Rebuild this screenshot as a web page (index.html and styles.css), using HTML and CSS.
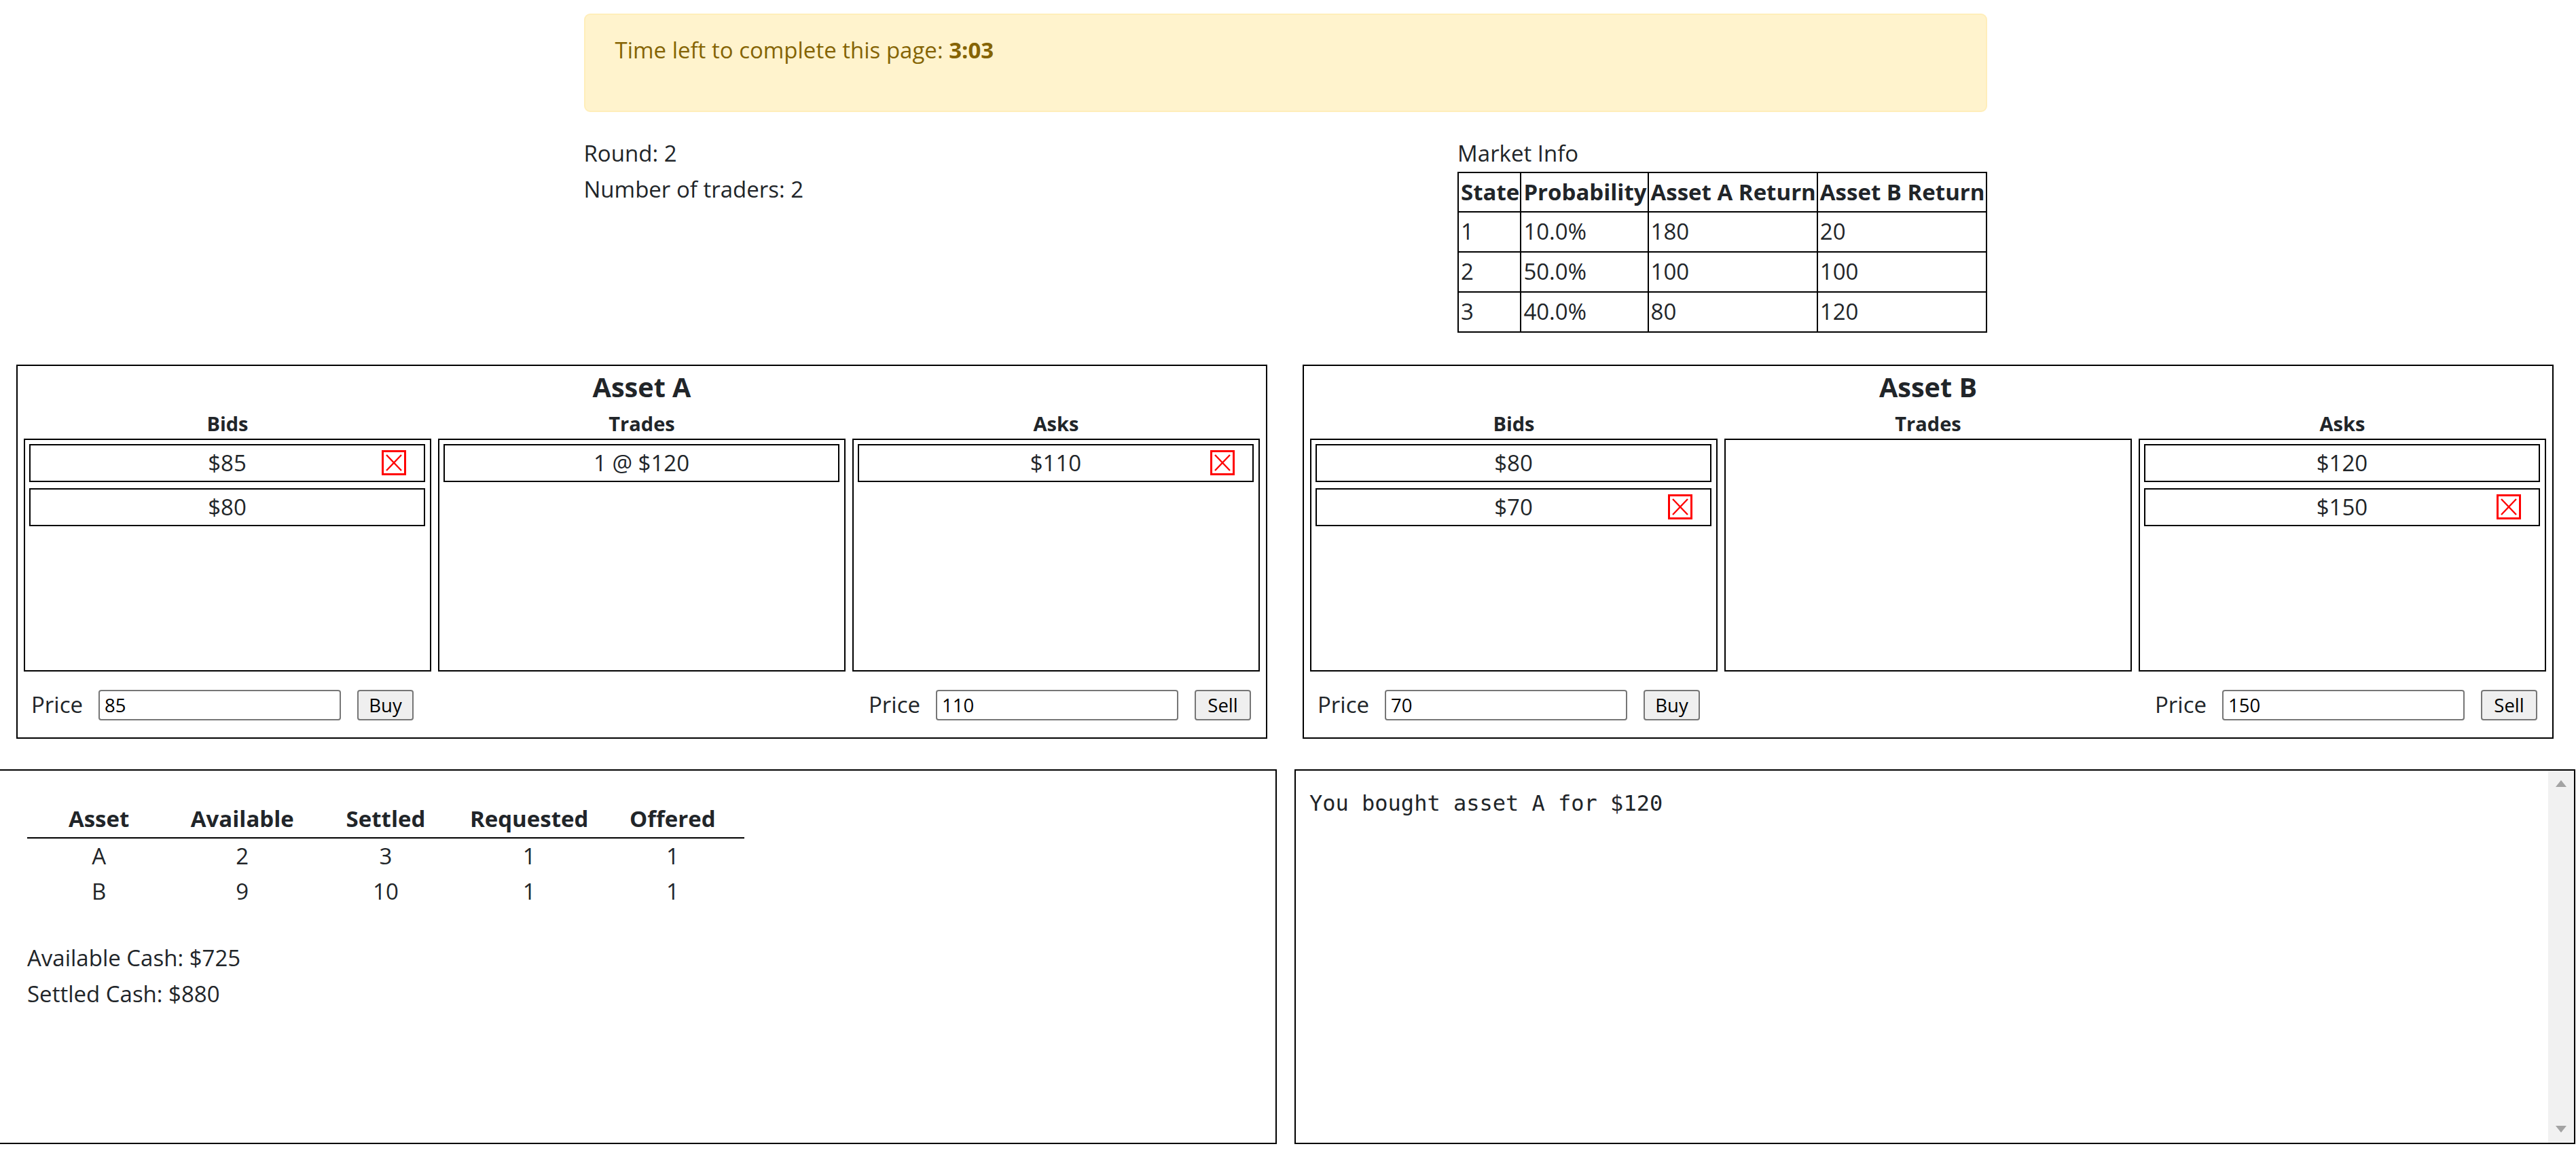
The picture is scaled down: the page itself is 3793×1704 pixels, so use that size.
FILE: index.html
```html
<!DOCTYPE html>
<html lang="en">
<head>
<meta charset="utf-8">
<title>Market</title>
<link rel="stylesheet" href="styles.css">
</head>
<body>
<div class="page">
  <div class="alert"><p>Time left to complete this page: <strong>3:03</strong></p></div>
  <div class="info">
    <div class="meta">
      <div>Round: 2</div>
      <div>Number of traders: 2</div>
    </div>
    <div class="market">
      <div>Market Info</div>
      <table class="mkt">
        <tr><th>State</th><th>Probability</th><th>Asset A Return</th><th>Asset B Return</th></tr>
        <tr><td>1</td><td>10.0%</td><td>180</td><td>20</td></tr>
        <tr><td>2</td><td>50.0%</td><td>100</td><td>100</td></tr>
        <tr><td>3</td><td>40.0%</td><td>80</td><td>120</td></tr>
      </table>
    </div>
  </div>
</div>

<div class="assets">
  <section class="asset">
    <h2 class="asset-title">Asset A</h2>
    <div class="cols">
      <div class="col">
        <div class="col-title">Bids</div>
        <div class="list">
          <div class="item"><span class="val">$85</span><svg class="xbtn" viewBox="0 0 36 37" width="36" height="37"><rect x="1.5" y="1.5" width="33" height="34" fill="none" stroke="#ff0000" stroke-width="3"/><path d="M7 7 L29 30 M29 7 L7 30" stroke="#ff0000" stroke-width="2.4"/></svg></div>
          <div class="item"><span class="val">$80</span></div>
        </div>
      </div>
      <div class="col">
        <div class="col-title">Trades</div>
        <div class="list">
          <div class="item"><span class="val">1 @ $120</span></div>
        </div>
      </div>
      <div class="col">
        <div class="col-title">Asks</div>
        <div class="list">
          <div class="item"><span class="val">$110</span><svg class="xbtn" viewBox="0 0 36 37" width="36" height="37"><rect x="1.5" y="1.5" width="33" height="34" fill="none" stroke="#ff0000" stroke-width="3"/><path d="M7 7 L29 30 M29 7 L7 30" stroke="#ff0000" stroke-width="2.4"/></svg></div>
        </div>
      </div>
    </div>
    <div class="price-row">
      <div class="order"><label class="plabel">Price</label><input class="pinput" type="text" value="85"><button class="pbtn">Buy</button></div>
      <div class="order"><label class="plabel">Price</label><input class="pinput" type="text" value="110"><button class="pbtn">Sell</button></div>
    </div>
  </section>

  <section class="asset">
    <h2 class="asset-title">Asset B</h2>
    <div class="cols">
      <div class="col">
        <div class="col-title">Bids</div>
        <div class="list">
          <div class="item"><span class="val">$80</span></div>
          <div class="item"><span class="val">$70</span><svg class="xbtn" viewBox="0 0 36 37" width="36" height="37"><rect x="1.5" y="1.5" width="33" height="34" fill="none" stroke="#ff0000" stroke-width="3"/><path d="M7 7 L29 30 M29 7 L7 30" stroke="#ff0000" stroke-width="2.4"/></svg></div>
        </div>
      </div>
      <div class="col">
        <div class="col-title">Trades</div>
        <div class="list"></div>
      </div>
      <div class="col">
        <div class="col-title">Asks</div>
        <div class="list">
          <div class="item"><span class="val">$120</span></div>
          <div class="item"><span class="val">$150</span><svg class="xbtn" viewBox="0 0 36 37" width="36" height="37"><rect x="1.5" y="1.5" width="33" height="34" fill="none" stroke="#ff0000" stroke-width="3"/><path d="M7 7 L29 30 M29 7 L7 30" stroke="#ff0000" stroke-width="2.4"/></svg></div>
        </div>
      </div>
    </div>
    <div class="price-row">
      <div class="order"><label class="plabel">Price</label><input class="pinput" type="text" value="70"><button class="pbtn">Buy</button></div>
      <div class="order"><label class="plabel">Price</label><input class="pinput" type="text" value="150"><button class="pbtn">Sell</button></div>
    </div>
  </section>
</div>

<div class="bottom">
  <section class="panel holdings">
    <table class="hold">
      <thead>
        <tr><th>Asset</th><th>Available</th><th>Settled</th><th>Requested</th><th>Offered</th></tr>
      </thead>
      <tbody>
        <tr><td>A</td><td>2</td><td>3</td><td>1</td><td>1</td></tr>
        <tr><td>B</td><td>9</td><td>10</td><td>1</td><td>1</td></tr>
      </tbody>
    </table>
    <div class="cash">
      <div>Available Cash: $725</div>
      <div>Settled Cash: $880</div>
    </div>
  </section>
  <section class="panel log">
    <div class="log-text">You bought asset A for $120</div>
    <div class="scrollbar"><span class="arrow-up"></span><span class="arrow-down"></span></div>
  </section>
</div>
</body>
</html>
```

FILE: styles.css
```css
* { box-sizing: border-box; }

html, body {
  margin: 0;
  padding: 0;
  background: #ffffff;
}

body {
  font-family: "Open Sans", "Noto Sans", sans-serif;
  font-size: 33px;
  line-height: 52.8px;
  color: #212529;
  overflow: hidden;
}

.page {
  width: 2066px;
  margin-left: calc(50% - 1037px);
  padding-top: 20px;
}

.alert {
  background: #fff3cd;
  border: 2px solid #ffeeba;
  border-radius: 9px;
  color: #856404;
  padding: 26px 44px 27px;
  margin-bottom: 35px;
}

.alert p {
  margin: 0 0 35px;
}

.alert strong { font-weight: 700; }

.info {
  display: flex;
  justify-content: space-between;
  align-items: flex-start;
}

.mkt {
  border-collapse: collapse;
}

.mkt th, .mkt td {
  border: 2px solid #000;
  padding: 2px 1px 2px 3px;
  text-align: left;
  font-weight: 400;
  line-height: 52.8px;
  white-space: nowrap;
}

.mkt th { font-weight: 700; }

/* asset panels */
.assets {
  display: flex;
  gap: 52px;
  margin: 47px 0 0 24px;
}

.asset {
  width: 1842px;
  flex: none;
  border: 2px solid #000;
  padding: 0 9px 25px;
}

.asset-title {
  margin: 0;
  padding-top: 6px;
  font-size: 39.6px;
  line-height: 50px;
  font-weight: 700;
  text-align: center;
}

.cols {
  display: flex;
  gap: 10px;
}

.col { flex: 1; min-width: 0; }

.col-title {
  padding-top: 7px;
  font-size: 29px;
  line-height: 44px;
  font-weight: 700;
  text-align: center;
}

.list {
  height: 343px;
  border: 2px solid #000;
  padding: 6px 7px 6px 6px;
}

.item {
  display: grid;
  grid-template-columns: 1fr auto 1fr;
  align-items: center;
  height: 56px;
  border: 2px solid #000;
  margin-bottom: 9px;
  line-height: 52px;
}

.val {
  grid-column: 2;
  white-space: nowrap;
}

.xbtn {
  grid-column: 3;
  justify-self: end;
  margin-right: 26px;
  display: block;
}

.price-row {
  display: flex;
  justify-content: space-between;
  margin-top: 27px;
  padding: 0 13px 0 11px;
}

.order {
  display: flex;
  align-items: center;
  height: 45px;
}

.plabel {
  margin-right: 23px;
}

.pinput {
  width: 357px;
  height: 45px;
  border: 2px solid #767676;
  border-radius: 4px;
  padding: 0 7px;
  font-family: "Open Sans", "Noto Sans", sans-serif;
  font-size: 27.5px;
  color: #000;
  background: #fff;
  margin: 0 24px 0 0;
  outline: none;
}

.pbtn {
  width: 83px;
  height: 45px;
  border: 2px solid #767676;
  border-radius: 4px;
  background: #efefef;
  font-family: "Open Sans", "Noto Sans", sans-serif;
  font-size: 27.5px;
  color: #000;
  padding: 0;
  margin: 0;
}

/* bottom panels */
.bottom {
  display: flex;
  gap: 26px;
  margin: 45px 0 0 -6px;
}

.panel {
  flex: none;
  width: 1886px;
  height: 552px;
  border: 2px solid #000;
}

.holdings {
  padding: 45px 0 0 44px;
}

.hold {
  border-collapse: collapse;
  table-layout: fixed;
  width: 1056px;
}

.hold th, .hold td {
  width: 211.2px;
  padding: 0;
  text-align: center;
  line-height: 52.8px;
}

.hold th {
  font-weight: 700;
  border-bottom: 2px solid #000;
}

.cash {
  margin-top: 45px;
}

.log {
  display: flex;
}

.log-text {
  flex: 1;
  padding: 28px 0 0 20px;
  font-family: "DejaVu Sans Mono", "Liberation Mono", monospace;
  font-size: 32px;
  line-height: 40px;
  color: #212529;
  white-space: pre;
}

.scrollbar {
  width: 38px;
  background: #f1f1f1;
  display: flex;
  flex-direction: column;
  justify-content: space-between;
  align-items: center;
  padding: 14px 0 15px;
}

.arrow-up {
  width: 0;
  height: 0;
  border-left: 8.5px solid transparent;
  border-right: 8.5px solid transparent;
  border-bottom: 10px solid #a3a3a3;
}

.arrow-down {
  width: 0;
  height: 0;
  border-left: 8.5px solid transparent;
  border-right: 8.5px solid transparent;
  border-top: 10px solid #a3a3a3;
}
```
